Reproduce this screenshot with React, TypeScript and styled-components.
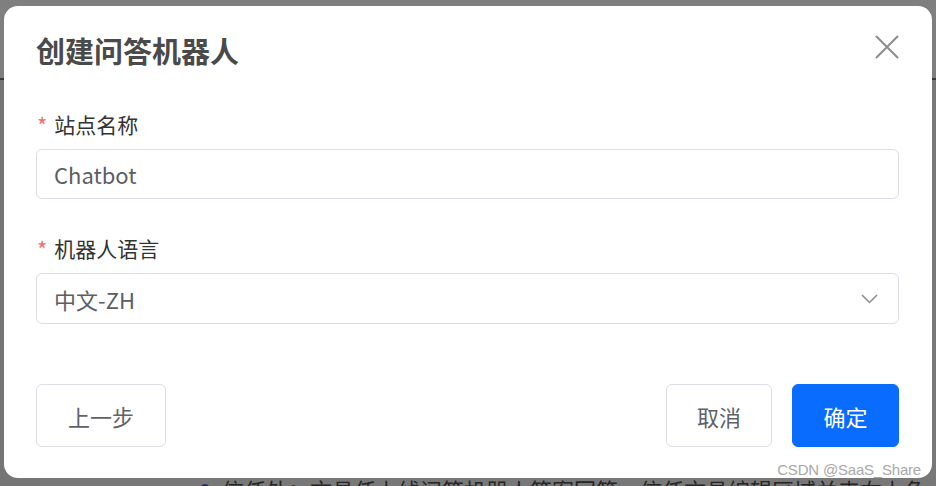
import styled, { createGlobalStyle } from "styled-components";

const GlobalStyle = createGlobalStyle`
  html, body {
    margin: 0;
    padding: 0;
  }
  body {
    font-family: "Noto Sans CJK SC", "Noto Sans", sans-serif;
    background: #7a7a7a;
  }
`;

const Page = styled.div`
  position: relative;
  width: 936px;
  height: 486px;
  overflow: hidden;
  background: #787878;
  display: flex;
  flex-direction: column;
`;

const PageHeader = styled.div`
  height: 78px;
  background: #7f7f7f;
  border-bottom: 2px solid #3a3a3a;
`;

const PageBody = styled.div`
  flex: 1;
  display: flex;
`;

const SideNav = styled.div`
  width: 40px;
  background: #757575;
`;

const Content = styled.div`
  flex: 1;
  display: flex;
  flex-direction: column;
  justify-content: flex-end;
  padding-left: 160px;
  overflow: hidden;
`;

const Notice = styled.div`
  display: flex;
  align-items: center;
  gap: 12px;
  height: 22px;
  margin-bottom: -14px;
  font-size: 22px;
  color: #262626;
  white-space: nowrap;

  &::before {
    content: "";
    width: 10px;
    height: 10px;
    border-radius: 50%;
    background: #243566;
  }
`;

const Modal = styled.div`
  position: absolute;
  left: 4px;
  top: 6px;
  width: 928px;
  height: 472px;
  box-sizing: border-box;
  background: #fff;
  border-radius: 14px;
  padding: 24px 33px 0 32px;
  display: flex;
  flex-direction: column;
`;

const Header = styled.div`
  display: flex;
  align-items: center;
  justify-content: space-between;
  height: 40px;
`;

const Title = styled.h2`
  margin: 0;
  font-size: 29px;
  line-height: 40px;
  font-weight: 700;
  color: #4a4a4a;
`;

const CloseButton = styled.button`
  border: none;
  background: none;
  padding: 0;
  margin-right: -2px;
  margin-top: -6px;
  width: 28px;
  height: 28px;
  display: flex;
  align-items: center;
  justify-content: center;
  cursor: pointer;
`;

const FormItem = styled.div<{ $top: number }>`
  margin-top: ${(p) => p.$top}px;
  display: flex;
  flex-direction: column;
  gap: 10px;
`;

const Label = styled.label`
  display: flex;
  align-items: center;
  height: 30px;
  font-size: 21px;
  color: #333;

  &::before {
    content: "*";
    color: #f56c6c;
    margin-right: 7px;
    margin-left: 1px;
    font-size: 22px;
  }
`;

const Field = styled.div<{ $height: number }>`
  height: ${(p) => p.$height}px;
  box-sizing: border-box;
  border: 1px solid #dcdfe6;
  border-radius: 6px;
  display: flex;
  align-items: center;
  justify-content: space-between;
  padding: 0 20px 0 17px;
  font-size: 22px;
  color: #5c5e63;
`;

const Footer = styled.div`
  margin-top: 60px;
  display: flex;
  justify-content: space-between;
`;

const Group = styled.div`
  display: flex;
  gap: 20px;
`;

const Button = styled.button<{ $primary?: boolean; $width: number }>`
  width: ${(p) => p.$width}px;
  height: 63px;
  box-sizing: border-box;
  border-radius: 6px;
  font-family: inherit;
  font-size: 22px;
  cursor: pointer;
  border: 1px solid ${(p) => (p.$primary ? "#0a6cff" : "#dcdfe6")};
  background: ${(p) => (p.$primary ? "#0a6cff" : "#fff")};
  color: ${(p) => (p.$primary ? "#fff" : "#606266")};
`;

const Watermark = styled.div`
  position: absolute;
  right: 15px;
  bottom: 8px;
  font-family: "Liberation Sans", sans-serif;
  font-size: 15px;
  color: #a8a8a8;
  letter-spacing: -0.2px;
`;

export default function App() {
  return (
    <>
      <GlobalStyle />
      <Page>
        <PageHeader />
        <PageBody>
          <SideNav />
          <Content>
            <Notice>信任处：文具任上线问答机器人答案回答，信任文具编辑区域并来右上角</Notice>
          </Content>
        </PageBody>

        <Modal>
          <Header>
            <Title>创建问答机器人</Title>
            <CloseButton aria-label="关闭">
              <svg width="24" height="24" viewBox="0 0 24 24" fill="none" stroke="#8c8c8c" strokeWidth="2" strokeLinecap="round">
                <path d="M1.5 1.5 L22.5 22.5 M22.5 1.5 L1.5 22.5" />
              </svg>
            </CloseButton>
          </Header>

          <FormItem $top={39}>
            <Label>站点名称</Label>
            <Field $height={50}>Chatbot</Field>
          </FormItem>

          <FormItem $top={34}>
            <Label>机器人语言</Label>
            <Field $height={51}>
              <span>中文-ZH</span>
              <svg width="17" height="10" viewBox="0 0 17 10" fill="none" stroke="#8c8c8c" strokeWidth="1.5">
                <path d="M1 1 L8.5 8.5 L16 1" />
              </svg>
            </Field>
          </FormItem>

          <Footer>
            <Button $width={130}>上一步</Button>
            <Group>
              <Button $width={106}>取消</Button>
              <Button $width={107} $primary>确定</Button>
            </Group>
          </Footer>
        </Modal>
        <Watermark>CSDN @SaaS_Share</Watermark>
      </Page>
    </>
  );
}
